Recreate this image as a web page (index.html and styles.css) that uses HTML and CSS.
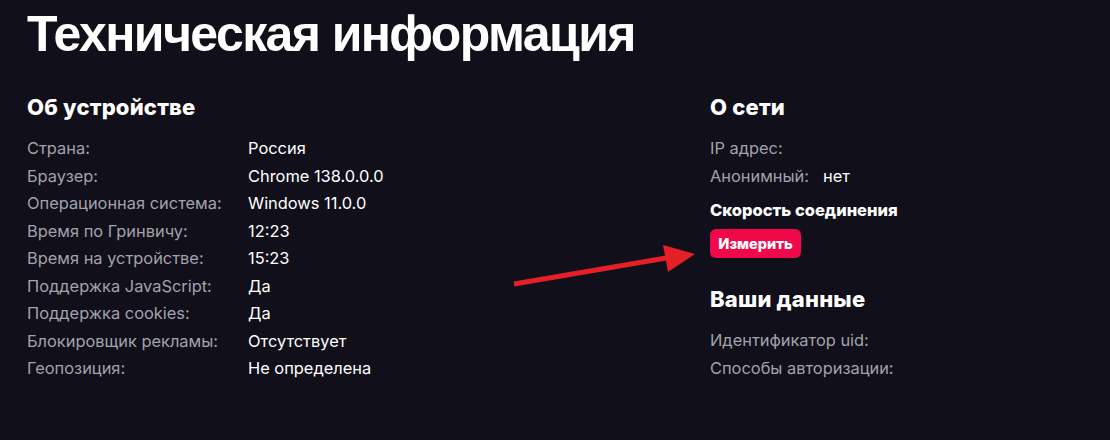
FILE: index.html
```html
<!DOCTYPE html>
<html lang="ru">
<head>
    <meta charset="UTF-8">
    <meta name="viewport" content="width=device-width, initial-scale=1.0">
    <title>Техническая информация</title>
    <link rel="stylesheet" href="styles.css">
</head>
<body>
    <div class="page">
        <h1>Техническая информация</h1>
        <div class="columns">
            <section class="device">
                <h2>Об устройстве</h2>
                <dl class="info">
                    <dt>Страна:</dt><dd>Россия</dd>
                    <dt>Браузер:</dt><dd>Chrome 138.0.0.0</dd>
                    <dt>Операционная система:</dt><dd>Windows 11.0.0</dd>
                    <dt>Время по Гринвичу:</dt><dd>12:23</dd>
                    <dt>Время на устройстве:</dt><dd>15:23</dd>
                    <dt>Поддержка JavaScript:</dt><dd>Да</dd>
                    <dt>Поддержка cookies:</dt><dd>Да</dd>
                    <dt>Блокировщик рекламы:</dt><dd>Отсутствует</dd>
                    <dt>Геопозиция:</dt><dd>Не определена</dd>
                </dl>
            </section>
            <section class="network">
                <h2>О сети</h2>
                <div class="row"><span class="label">IP адрес:</span></div>
                <div class="row"><span class="label">Анонимный:</span><span class="value">нет</span></div>
                <h3>Скорость соединения</h3>
                <button class="measure">Измерить</button>
                <h2 class="data-title">Ваши данные</h2>
                <div class="row"><span class="label">Идентификатор uid:</span></div>
                <div class="row"><span class="label">Способы авторизации:</span></div>
            </section>
        </div>
    </div>
    <svg class="arrow" width="200" height="50" viewBox="0 0 200 50">
        <line x1="14" y1="44" x2="172" y2="17" stroke="#e41f26" stroke-width="5"/>
        <polygon points="163,5 195,14 168,32" fill="#e41f26"/>
    </svg>
</body>
</html>
```

FILE: styles.css
```css
body {
    margin: 0;
    background: #100f1a;
    color: #fff;
    font-family: Inter, "Liberation Sans", Arial, sans-serif;
}
.page {
    padding: 0 27px;
}
h1 {
    margin: 0;
    padding-top: 4px;
    font-family: "Liberation Sans", Arial, sans-serif;
    font-size: 50px;
    font-weight: bold;
    line-height: 60px;
    letter-spacing: -1.6px;
}
.columns {
    display: flex;
    margin-top: 30px;
}
.device {
    width: 683px;
}
h2 {
    margin: 0 0 15px;
    font-size: 22px;
    font-weight: 800;
    line-height: 26px;
    letter-spacing: 0.2px;
}
.info {
    display: grid;
    grid-template-columns: 221px 1fr;
    margin: 0;
    font-size: 16.4px;
    line-height: 27.5px;
}
.info dt {
    color: #a3a3ab;
}
.info dd {
    margin: 0;
}
.row {
    font-size: 16.4px;
    line-height: 27.5px;
}
.label {
    color: #a3a3ab;
}
.value {
    margin-left: 14px;
}
h3 {
    margin: 9px 0 8px;
    font-size: 16.5px;
    font-weight: 800;
    line-height: 22px;
}
.measure {
    display: block;
    width: 91px;
    height: 29px;
    padding: 0;
    border: none;
    border-radius: 6px;
    background: #f0094a;
    color: #fff;
    font-family: inherit;
    font-size: 14.5px;
    font-weight: 800;
    cursor: pointer;
}
.data-title {
    margin-top: 28px;
    margin-bottom: 15px;
}
.arrow {
    position: absolute;
    left: 500px;
    top: 240px;
}
```
